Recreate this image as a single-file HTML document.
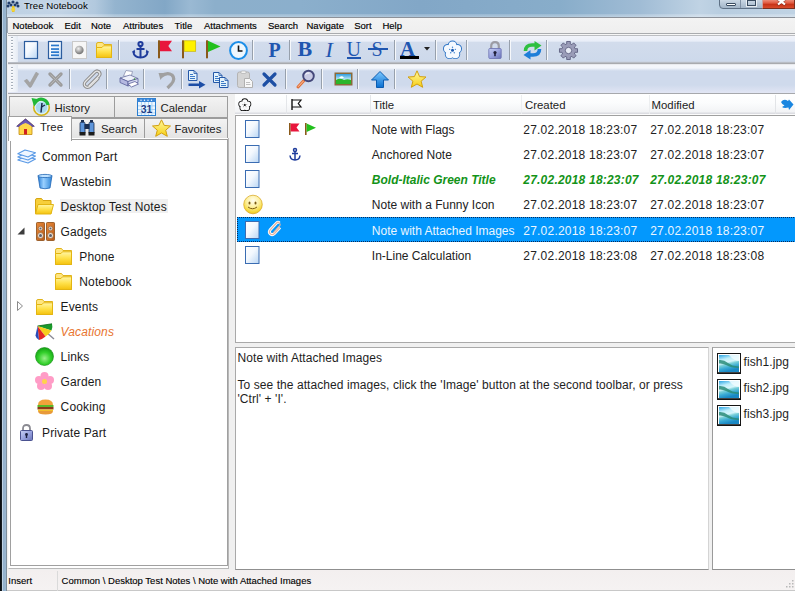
<!DOCTYPE html><html><head><meta charset="utf-8"><style>
*{margin:0;padding:0;box-sizing:border-box}
html,body{width:795px;height:591px;overflow:hidden;background:#f0f0f0;font-family:"Liberation Sans",sans-serif;color:#1a1a1a;position:relative}
.a{position:absolute}
.t{position:absolute;white-space:nowrap;font-size:12px;line-height:14px;color:#222}
svg{position:absolute;overflow:visible}
.mi{position:absolute;top:20px;font-size:9.5px;line-height:11px;color:#000;white-space:nowrap;-webkit-text-stroke:0.15px #000}
.tbar{position:absolute;left:8px;width:787px;background:linear-gradient(#f3f6fa 0,#eef2f8 7px,#d4dfee 9px,#cdd9eb 100%)}
.sep{position:absolute;width:1px;background:#97a0ac;box-shadow:1px 0 0 #f6f8fb}
.grip{position:absolute;left:11px;width:2px;background:repeating-linear-gradient(#a7b0bb 0 1px,#fbfcfd 1px 2px,transparent 2px 3px)}
.bd{position:absolute;border:1px solid #a9a9a9;background:#fff}
</style></head><body>
<div class="a" style="left:0;top:0;width:795px;height:17px;background:linear-gradient(90deg,#bed1e3 0px,#c2d4e6 60px,#b2c9de 95px,#94b4cf 115px,#82a7c6 165px,#9ab9d3 190px,#8cafcb 215px,#8bafcc 300px,#82a7c7 420px,#88adca 560px,#a0bcd5 640px,#c0d3e4 700px,#b8cde0 720px,#c0d3e4 795px)"></div>
<div class="a" style="left:0;top:14px;width:795px;height:3px;background:linear-gradient(rgba(255,255,255,0.15),rgba(255,255,255,0.35))"></div>
<div class="a" style="left:0;top:0;width:2px;height:591px;background:linear-gradient(90deg,#06090c,#1a2228)"></div>
<div class="a" style="left:2px;top:0;width:5px;height:591px;background:linear-gradient(90deg,#c0d3e5 0,#c0d3e5 0.8px,#92b0cc 1.2px,#9ab6d0 3.8px,#7d8e9c 4.2px,#7d8e9c 5px)"></div>
<svg style="left:6px;top:0" width="14" height="13" viewBox="0 0 14 13"><g fill="#213d6b"><circle cx="3" cy="3" r="1.6"/><circle cx="7" cy="2" r="1.6"/><circle cx="11" cy="3" r="1.6"/><circle cx="2" cy="6" r="1.5"/><circle cx="12" cy="6" r="1.5"/><circle cx="5" cy="5" r="1.5"/><circle cx="9" cy="5" r="1.5"/></g><rect x="6" y="6" width="2.5" height="6" fill="#e8c21c"/><circle cx="7.2" cy="9.5" r="2" fill="#f2d43a"/></svg>
<div class="t" style="left:24px;top:1px;font-size:9.7px;line-height:10px;color:#000;text-shadow:0 0 4px rgba(255,255,255,0.6)">Tree Notebook</div>
<div class="a" style="left:719px;top:-2px;width:44px;height:11px;border:1px solid #5f7186;border-radius:0 0 0 4px;background:linear-gradient(#d0dce8,#b8c8d8 50%,#a4b6c8)"></div>
<div class="a" style="left:740px;top:-2px;width:1px;height:10px;background:#7f90a4"></div>
<div class="a" style="left:726px;top:2.5px;width:10px;height:3px;background:#fff;border:1px solid #3a4c60;border-radius:1px"></div>
<div class="a" style="left:747px;top:-2px;width:9px;height:7.5px;border:1px solid #3a4c60;border-top-width:3px;background:transparent;box-shadow:0 0 0 1px rgba(255,255,255,0.7)"></div>
<div class="a" style="left:762px;top:-2px;width:33px;height:11px;border:1px solid #7a3020;border-left:1px solid #c8a0a0;background:linear-gradient(#f09a88,#e05a40 45%,#c83418 60%,#d84a2a)"></div>
<svg style="position:absolute;left:777px;top:-1px;overflow:visible" width="9" height="6"><path d="M0.5 0 L8.5 6 M8.5 0 L0.5 6" stroke="#3a1a10" stroke-width="3" opacity="0.35"/><path d="M1 0 L8 5.5 M8 0 L1 5.5" stroke="#fff" stroke-width="2.2"/></svg>
<div class="a" style="left:7px;top:17px;width:788px;height:16px;background:linear-gradient(#f3f3f3,#efefef);border-top:1px solid #8c9199;border-left:1px solid #99a4b1"></div>
<div class="mi" style="left:12.5px">Notebook</div>
<div class="mi" style="left:64.5px">Edit</div>
<div class="mi" style="left:91px">Note</div>
<div class="mi" style="left:123px">Attributes</div>
<div class="mi" style="left:174.6px">Title</div>
<div class="mi" style="left:204px">Attachments</div>
<div class="mi" style="left:268px">Search</div>
<div class="mi" style="left:306.5px">Navigate</div>
<div class="mi" style="left:354.2px">Sort</div>
<div class="mi" style="left:382.4px">Help</div>
<div class="a" style="left:8px;top:33px;width:787px;height:61px;background:linear-gradient(#a9abae 0px,#a9abae 1px,#f6f6f6 1px,#f6f6f6 2px,#bcbec2 2px,#bcbec2 3px,#f2f4fa 3px,#e9eef8 8px,#d2dcec 9.5px,#cdd9eb 28px,#c9d0dc 29px,#a8aaae 30px,#a8aaae 31px,#dcdee2 31px,#f4f6fa 32px,#f3f6fb 35px,#e0e7f3 36.5px,#cfdaec 38px,#cfdaec 52px,#dfe4f3 59px,#e2e6f4 60px,#a6a8ac 60px,#a6a8ac 61px)"></div>
<div class="a" style="left:8px;top:36px;width:10px;height:26px;background:linear-gradient(90deg,#f7f8fb,#eef2f8 70%,#e4eaf3)"></div>
<div class="a" style="left:8px;top:65px;width:10px;height:27px;background:linear-gradient(90deg,#f7f8fb,#eef2f8 70%,#e4eaf3)"></div>
<div class="grip" style="top:37px;height:24px"></div>
<div class="grip" style="top:67px;height:24px"></div>
<div class="sep" style="left:118px;top:40px;height:19.5px"></div>
<div class="sep" style="left:251.5px;top:40px;height:19.5px"></div>
<div class="sep" style="left:288.5px;top:40px;height:19.5px"></div>
<div class="sep" style="left:393.5px;top:40px;height:19.5px"></div>
<div class="sep" style="left:435px;top:40px;height:19.5px"></div>
<div class="sep" style="left:466px;top:40px;height:19.5px"></div>
<div class="sep" style="left:509px;top:40px;height:19.5px"></div>
<div class="sep" style="left:546px;top:40px;height:19.5px"></div>
<div class="sep" style="left:69px;top:69px;height:20px"></div>
<div class="sep" style="left:106px;top:69px;height:20px"></div>
<div class="sep" style="left:143px;top:69px;height:20px"></div>
<div class="sep" style="left:180.5px;top:69px;height:20px"></div>
<div class="sep" style="left:284.5px;top:69px;height:20px"></div>
<div class="sep" style="left:320.5px;top:69px;height:20px"></div>
<div class="sep" style="left:357px;top:69px;height:20px"></div>
<div class="sep" style="left:394px;top:69px;height:20px"></div>
<svg width="0" height="0" style="position:absolute"><defs>
<linearGradient id="pg" x1="0" y1="0" x2="1" y2="1"><stop offset="0" stop-color="#ffffff"/><stop offset="0.45" stop-color="#f3f8fe"/><stop offset="1" stop-color="#b9d6f4"/></linearGradient>
<linearGradient id="fold" x1="0" y1="0" x2="0" y2="1"><stop offset="0" stop-color="#fff6a8"/><stop offset="0.5" stop-color="#ffe14a"/><stop offset="1" stop-color="#f4c20e"/></linearGradient>
<radialGradient id="sph" cx="0.4" cy="0.35" r="0.7"><stop offset="0" stop-color="#f2f2f2"/><stop offset="0.6" stop-color="#9c9c9c"/><stop offset="1" stop-color="#6a6a6a"/></radialGradient>
<radialGradient id="grn" cx="0.5" cy="0.6" r="0.6"><stop offset="0" stop-color="#9af08a"/><stop offset="0.55" stop-color="#34d02c"/><stop offset="1" stop-color="#12a012"/></radialGradient>
<radialGradient id="smile" cx="0.5" cy="0.3" r="0.75"><stop offset="0" stop-color="#fffdf0"/><stop offset="0.45" stop-color="#fdf0a0"/><stop offset="0.8" stop-color="#f6d838"/><stop offset="1" stop-color="#e8b818"/></radialGradient>
<linearGradient id="sky" x1="0" y1="0" x2="0" y2="1"><stop offset="0" stop-color="#2f9de0"/><stop offset="0.55" stop-color="#bfe9f6"/><stop offset="1" stop-color="#1a8fb0"/></linearGradient>
<linearGradient id="fish" x1="0" y1="0" x2="0.3" y2="1"><stop offset="0" stop-color="#2aa4e4"/><stop offset="0.3" stop-color="#bfeefa"/><stop offset="0.5" stop-color="#d8f6fb"/><stop offset="0.62" stop-color="#78cfd8"/><stop offset="0.8" stop-color="#3aaad4"/><stop offset="1" stop-color="#1a88c4"/></linearGradient>
<linearGradient id="lockg" x1="0" y1="0" x2="1" y2="1"><stop offset="0" stop-color="#c8d0f4"/><stop offset="0.5" stop-color="#9aa4e0"/><stop offset="1" stop-color="#6a74b8"/></linearGradient>
<linearGradient id="bucket" x1="0" y1="0" x2="1" y2="0"><stop offset="0" stop-color="#2a7fd6"/><stop offset="0.4" stop-color="#9ad0ff"/><stop offset="1" stop-color="#2f86d8"/></linearGradient>
<linearGradient id="arrowg" x1="0" y1="0" x2="0" y2="1"><stop offset="0" stop-color="#7cc8ff"/><stop offset="1" stop-color="#0a6fd0"/></linearGradient>
<linearGradient id="starg" x1="0" y1="0" x2="0" y2="1"><stop offset="0" stop-color="#fff8a0"/><stop offset="1" stop-color="#f7cf12"/></linearGradient>
</defs></svg>
<svg style="left:24px;top:41px" width="14" height="18" viewBox="0 0 14 18"><rect x="0.5" y="0.5" width="13" height="17" fill="url(#pg)" stroke="#2c5d9e" stroke-width="1.2"/></svg>
<svg style="left:48px;top:41px" width="14" height="18" viewBox="0 0 14 18"><rect x="0.5" y="0.5" width="13" height="17" fill="url(#pg)" stroke="#2c5d9e" stroke-width="1.2"/><rect x="3" y="3.6" width="8" height="1.7" fill="#2a78cc"/><rect x="3" y="7.2" width="8" height="1.7" fill="#2a78cc"/><rect x="3" y="10.3" width="8" height="1.7" fill="#2a78cc"/><rect x="3" y="13.4" width="8" height="1.7" fill="#2a78cc"/></svg>
<svg style="left:72px;top:41px" width="15" height="18" viewBox="0 0 15 18"><rect x="0.5" y="0.5" width="14" height="17" fill="#f6f6f6" stroke="#c9c9c9"/><circle cx="7.3" cy="9" r="4.3" fill="url(#sph)"/></svg>
<svg style="left:96px;top:42px" width="16" height="16" viewBox="0 0 16 16"><path d="M0.5 2.2 Q0.5 0.5 2 0.5 L6.5 0.5 L8 2.5 L15.5 2.5 L15.5 15.5 L0.5 15.5 Z" fill="#ffe680" stroke="#e0b31a"/><path d="M0.5 5.5 L6 5.5 L7.5 3.8 L15.5 3.8 L15.5 15.5 L0.5 15.5 Z" fill="url(#fold)" stroke="#e3b512"/></svg>
<svg style="left:132px;top:41px" width="17" height="18" viewBox="0 0 17 18"><g fill="none" stroke="#1f3c9c" stroke-width="2"><circle cx="8.5" cy="3" r="2.1"/><line x1="8.5" y1="5" x2="8.5" y2="16.5"/><line x1="4.5" y1="8" x2="12.5" y2="8"/><path d="M1.3 10.5 Q2 16.5 8.5 16.5 Q15 16.5 15.7 10.5"/></g><path d="M0 11 L2.6 8.5 L3.2 12 Z M17 11 L14.4 8.5 L13.8 12Z" fill="#1f3c9c"/></svg>
<svg style="left:157.5px;top:40px" width="15" height="18" viewBox="0 0 15 18"><rect x="0" y="0.3" width="2" height="18" fill="#8a5a1a"/><path d="M2 0.8 L14 0.8 L10.3 6 L14 11.3 L2 11.3 Z" fill="#e8163c"/></svg>
<svg style="left:182px;top:40px" width="15" height="18" viewBox="0 0 15 18"><rect x="0" y="0.3" width="2" height="18" fill="#8a5a1a"/><rect x="2.2" y="0.8" width="11.5" height="10.5" fill="#fff200" stroke="#c8b400" stroke-width="0.7"/></svg>
<svg style="left:206px;top:40px" width="15" height="18" viewBox="0 0 15 18"><rect x="0" y="0.3" width="2" height="18" fill="#8a5a1a"/><path d="M2 0.8 L14.5 6.5 L2 12 Z" fill="#22c01c"/></svg>
<svg style="left:228.5px;top:41px" width="19" height="19" viewBox="0 0 19 19"><circle cx="9.5" cy="9.5" r="8.4" fill="#eef7fd" stroke="#1b8ee8" stroke-width="2"/><path d="M9.5 4.5 L9.5 10 L13.5 10" fill="none" stroke="#111" stroke-width="1.6"/></svg>
<div class="t" style="left:268.5px;top:40px;font-family:'Liberation Serif';font-weight:bold;font-size:20px;line-height:20px;color:#1f56b0">P</div>
<div class="t" style="left:297.5px;top:39px;font-family:'Liberation Serif';font-weight:bold;font-size:22px;line-height:20px;color:#1f56b0">B</div>
<div class="t" style="left:325.5px;top:39.5px;font-family:'Liberation Serif';font-style:italic;font-size:22px;line-height:20px;color:#1f56b0">I</div>
<div class="t" style="left:346.5px;top:39px;font-family:'Liberation Serif';font-size:20px;line-height:20px;color:#1f56b0">U</div>
<div class="a" style="left:347px;top:57px;width:14px;height:1.5px;background:#1f56b0"></div>
<div class="t" style="left:371.5px;top:39px;font-family:'Liberation Serif';font-size:20px;line-height:20px;color:#1f56b0">S</div>
<div class="a" style="left:368px;top:48px;width:20px;height:2px;background:#1f56b0"></div>
<div class="t" style="left:400px;top:39px;font-family:'Liberation Serif';font-weight:bold;font-size:21px;line-height:20px;color:#1f56b0">A</div>
<div class="a" style="left:400px;top:56px;width:19px;height:3px;background:#000"></div>
<svg style="left:424px;top:47px" width="6" height="4" viewBox="0 0 6 4"><path d="M0 0 L6 0 L3 3.5Z" fill="#222"/></svg>
<svg style="left:442.5px;top:41px" width="19" height="18" viewBox="0 0 19 18"><circle cx="9.50" cy="4.40" r="4.1" fill="none" stroke="#2a72c4" stroke-width="1.5"/><circle cx="14.16" cy="7.79" r="4.1" fill="none" stroke="#2a72c4" stroke-width="1.5"/><circle cx="12.38" cy="13.26" r="4.1" fill="none" stroke="#2a72c4" stroke-width="1.5"/><circle cx="6.62" cy="13.26" r="4.1" fill="none" stroke="#2a72c4" stroke-width="1.5"/><circle cx="4.84" cy="7.79" r="4.1" fill="none" stroke="#2a72c4" stroke-width="1.5"/><circle cx="9.50" cy="4.40" r="3.9" fill="#f4f9ff"/><circle cx="14.16" cy="7.79" r="3.9" fill="#f4f9ff"/><circle cx="12.38" cy="13.26" r="3.9" fill="#f4f9ff"/><circle cx="6.62" cy="13.26" r="3.9" fill="#f4f9ff"/><circle cx="4.84" cy="7.79" r="3.9" fill="#f4f9ff"/><circle cx="9.5" cy="9.3" r="4.5" fill="#f4f9ff"/><circle cx="9.5" cy="9.3" r="1.5" fill="#1a5ab0"/><circle cx="9.50" cy="6.30" r="0.7" fill="#3a82d0"/><circle cx="12.35" cy="8.37" r="0.7" fill="#3a82d0"/><circle cx="11.26" cy="11.73" r="0.7" fill="#3a82d0"/><circle cx="7.74" cy="11.73" r="0.7" fill="#3a82d0"/><circle cx="6.65" cy="8.37" r="0.7" fill="#3a82d0"/></svg>
<svg style="left:488px;top:41px" width="14" height="18" viewBox="0 0 14 18"><path d="M3.2 8 L3.2 5.2 Q3.2 1.2 7 1.2 Q10.8 1.2 10.8 5.2 L10.8 8" fill="none" stroke="#9c9ca4" stroke-width="2.2"/><rect x="0.8" y="7.5" width="12.4" height="10" rx="1" fill="url(#lockg)" stroke="#6a70b0" stroke-width="0.8"/><circle cx="7" cy="11.5" r="1.6" fill="#20203a"/><rect x="6.2" y="12" width="1.6" height="3.2" fill="#20203a"/></svg>
<svg style="left:523px;top:41px" width="19" height="18" viewBox="0 0 19 18"><path d="M2.5 10 Q2.5 4 9 4 L12 4" fill="none" stroke="#2ec040" stroke-width="3.6"/><path d="M11.5 0 L18.5 4.5 L11.5 9.5Z" fill="#2ec040"/><path d="M16.5 8 Q16.5 14 10 14 L7 14" fill="none" stroke="#1e7ed8" stroke-width="3.6"/><path d="M7.5 9 L0.5 14 L7.5 18.5Z" fill="#1e7ed8"/></svg>
<svg style="left:559px;top:41px" width="19" height="19" viewBox="0 0 19 19"><g transform="translate(9.5,9.5)"><path d="M6.57 -1.75 L9.02 -1.83 L9.02 1.83 L6.57 1.75 L5.88 3.41 L7.67 5.08 L5.08 7.67 L3.41 5.88 L1.75 6.57 L1.83 9.02 L-1.83 9.02 L-1.75 6.57 L-3.41 5.88 L-5.08 7.67 L-7.67 5.08 L-5.88 3.41 L-6.57 1.75 L-9.02 1.83 L-9.02 -1.83 L-6.57 -1.75 L-5.88 -3.41 L-7.67 -5.08 L-5.08 -7.67 L-3.41 -5.88 L-1.75 -6.57 L-1.83 -9.02 L1.83 -9.02 L1.75 -6.57 L3.41 -5.88 L5.08 -7.67 L7.67 -5.08 L5.88 -3.41 Z" fill="#9a9cb8" stroke="#5e6080" stroke-width="0.9"/><circle r="3.2" fill="#e8ecf6" stroke="#5e6080" stroke-width="0.9"/></g></svg>
<svg style="left:24px;top:72px" width="15" height="16" viewBox="0 0 15 16"><path d="M0.3 8.8 L3 7.3 L6 11 L12 0.2 L14.6 1.8 L7 15.2 L5.4 15.2 Z" fill="#a4a4a4" stroke="#9a9a9a" stroke-width="0.6" stroke-linejoin="round"/></svg>
<svg style="left:48px;top:72px" width="15" height="15" viewBox="0 0 15 15"><path d="M2 2 L13 13 M13 2 L2 13" fill="none" stroke="#9c9c9c" stroke-width="3.4" stroke-linecap="round"/><path d="M2.5 2.5 L12.5 12.5 M12.5 2.5 L2.5 12.5" fill="none" stroke="#b4b4b4" stroke-width="1"/></svg>
<svg style="left:83px;top:70px" width="18" height="18" viewBox="0 0 18 18"><path d="M16 2 Q14 0 12 2 L2.5 11.5 Q0 14.5 2.5 16.5 Q5 18.5 8 15.5 L15 8.5" fill="none" stroke="#8e8e8e" stroke-width="3.2" stroke-linecap="round"/><path d="M16 2 Q18 4 16 6 L6 16" fill="none" stroke="#8e8e8e" stroke-width="3.2" stroke-linecap="round"/><path d="M16 2 Q14 0 12 2 L2.5 11.5 Q0 14.5 2.5 16.5 Q5 18.5 8 15.5 L15 8.5" fill="none" stroke="#e6e6e6" stroke-width="1.2" stroke-linecap="round"/><path d="M16 2 Q18 4 16 6 L6 16" fill="none" stroke="#e6e6e6" stroke-width="1.2" stroke-linecap="round"/></svg>
<svg style="left:119px;top:70px" width="20" height="18" viewBox="0 0 20 18"><path d="M4.5 6 L7 0.5 L13.5 1.5 L12 7Z" fill="#fff" stroke="#8a90b0" stroke-width="0.8"/><path d="M1 8 L11 5 L19 8.5 L9 11.5Z" fill="#eef0fa" stroke="#6a70a0" stroke-width="0.8"/><path d="M1 8 L9 11.5 L9 16 L1 12.5Z" fill="#b4b8e0" stroke="#5a609a" stroke-width="0.8"/><path d="M9 11.5 L19 8.5 L19 12.5 L9 16Z" fill="#d4d8f0" stroke="#5a609a" stroke-width="0.8"/><path d="M9 14 L16 11.5 L19.5 14 L12.5 17Z" fill="#fff" stroke="#5a609a" stroke-width="0.8"/><circle cx="15.5" cy="9" r="0.8" fill="#2a8a2a"/></svg>
<svg style="left:158px;top:71px" width="18" height="18" viewBox="0 0 18 18"><path d="M3 5.5 Q9 0.5 14 4 Q18 8 13 13.5 L9.5 17" fill="none" stroke="#a0a0a0" stroke-width="3.2"/><path d="M0.5 2 L7 2 L2.5 9Z" fill="#a0a0a0"/></svg>
<svg style="left:188px;top:70px" width="18" height="19" viewBox="0 0 18 19"><path d="M0.5 0.5 L6 0.5 L9 3.5 L9 10.5 L0.5 10.5Z" fill="#e4f3fc" stroke="#2458a8" stroke-width="1"/><path d="M6 0.5 L6 3.5 L9 3.5" fill="none" stroke="#2458a8" stroke-width="0.8"/><g fill="#2a6cc0"><rect x="2" y="4" width="3" height="0.9"/><rect x="2" y="6" width="5" height="0.9"/><rect x="2" y="8" width="5" height="0.9"/></g><path d="M0.5 13.5 L11 13.5 L11 11 L17.5 14.8 L11 18.5 L11 16 L0.5 16Z" fill="#1d4ea6"/></svg>
<svg style="left:213px;top:72px" width="17" height="16" viewBox="0 0 17 16"><path d="M0.5 0.5 L6 0.5 L9 3.5 L9 10.5 L0.5 10.5Z" fill="#e4f3fc" stroke="#2458a8" stroke-width="1"/><path d="M6 0.5 L6 3.5 L9 3.5" fill="none" stroke="#2458a8" stroke-width="0.8"/><g fill="#2a6cc0"><rect x="2" y="4" width="3" height="0.9"/><rect x="2" y="6" width="5" height="0.9"/><rect x="2" y="8" width="5" height="0.9"/></g><path d="M6.5 5.5 L12 5.5 L15 8.5 L15 15.5 L6.5 15.5Z" fill="#e4f3fc" stroke="#2458a8" stroke-width="1"/><path d="M12 5.5 L12 8.5 L15 8.5" fill="none" stroke="#2458a8" stroke-width="0.8"/><g fill="#2a6cc0"><rect x="8" y="9" width="3" height="0.9"/><rect x="8" y="11" width="5" height="0.9"/><rect x="8" y="13" width="5" height="0.9"/></g></svg>
<svg style="left:236.5px;top:71px" width="17" height="17" viewBox="0 0 17 17"><rect x="0.5" y="1" width="12" height="15.5" rx="2" fill="#d4d4d4" stroke="#b4b4b4"/><rect x="4" y="0" width="5" height="2.5" rx="1" fill="#f2f2f2" stroke="#a8a8a8" stroke-width="0.6"/><path d="M7.5 7.5 L12.5 7.5 L15.5 10.5 L15.5 16.5 L7.5 16.5Z" fill="#f8f8f8" stroke="#b0b0b0"/><g fill="#b8b8b8"><rect x="9" y="11" width="4" height="0.9"/><rect x="9" y="13" width="4.5" height="0.9"/></g></svg>
<svg style="left:262px;top:72px" width="15" height="15" viewBox="0 0 15 15"><path d="M2 2 L13 13 M13 2 L2 13" fill="none" stroke="#1d4fa4" stroke-width="3.2" stroke-linecap="round"/></svg>
<svg style="left:296px;top:70px" width="20" height="19" viewBox="0 0 20 19"><line x1="2" y1="17" x2="8" y2="10.5" stroke="#e0703a" stroke-width="3" stroke-linecap="round"/><line x1="2.3" y1="16.5" x2="7.5" y2="11" stroke="#ffd0b0" stroke-width="0.9" stroke-linecap="round"/><circle cx="12.5" cy="6" r="5.3" fill="#c9cbe4" stroke="#44487a" stroke-width="1.9"/><path d="M9.5 4.5 Q11 2.5 13.5 3" stroke="#fff" stroke-width="1" fill="none"/></svg>
<svg style="left:334px;top:72px" width="19" height="14" viewBox="0 0 19 14"><rect x="0.5" y="0.5" width="18" height="13" fill="#8a6a3a"/><rect x="2" y="2" width="15" height="10" fill="url(#sky)"/><path d="M2 8 Q6 5.5 10 8 Q13.5 6.5 17 8 L17 12 L2 12Z" fill="#2bb52b"/><path d="M5 6 Q7 3 10 5.5 L8 6.5Z" fill="#fff"/></svg>
<svg style="left:371px;top:71px" width="18" height="17" viewBox="0 0 18 17"><path d="M9 0.5 L17.5 9 L12.5 9 L12.5 16.5 L5.5 16.5 L5.5 9 L0.5 9Z" fill="url(#arrowg)" stroke="#0c5cb0"/></svg>
<svg style="left:407px;top:70px" width="20" height="18" viewBox="0 0 20 18"><path d="M10 0.8 L12.6 6.6 L19 7 L14.1 11.2 L15.7 17.3 L10 14 L4.3 17.3 L5.9 11.2 L1 7 L7.4 6.6Z" fill="url(#starg)" stroke="#d2a010" stroke-width="1"/></svg>
<div class="a" style="left:9px;top:96px;width:106px;height:22px;background:linear-gradient(#f3f3f3,#e4e4e4);border:1px solid #9c9c9c;"></div>
<div class="a" style="left:114px;top:96px;width:114px;height:22px;background:linear-gradient(#f3f3f3,#e4e4e4);border:1px solid #9c9c9c;"></div>
<div class="a" style="left:71px;top:118px;width:74px;height:21px;background:linear-gradient(#f3f3f3,#e4e4e4);border:1px solid #9c9c9c;"></div>
<div class="a" style="left:144px;top:118px;width:84px;height:21px;background:linear-gradient(#f3f3f3,#e4e4e4);border:1px solid #9c9c9c;"></div>
<div class="a" style="left:8px;top:138px;width:221px;height:431px;background:#fff;border:1px solid #b8b8b8;border-top:none;border-left-color:#fafafa"></div>
<div class="a" style="left:10px;top:139px;width:218px;height:427px;background:#fff;border:1px solid #a0a0a0"></div>
<div class="a" style="left:8px;top:116px;width:64px;height:25px;background:#fff;border:1px solid #a0a0a0;border-bottom:none"></div>
<div class="t" style="left:54.5px;top:101px;font-size:11.4px;color:#1c1c1c">History</div>
<div class="t" style="left:160.5px;top:101px;font-size:11.4px;color:#1c1c1c">Calendar</div>
<div class="t" style="left:40px;top:120px;font-size:11.4px;color:#1c1c1c">Tree</div>
<div class="t" style="left:101px;top:122px;font-size:11.4px;color:#1c1c1c">Search</div>
<div class="t" style="left:174.5px;top:122px;font-size:11.4px;color:#1c1c1c">Favorites</div>
<svg style="left:31px;top:97px" width="19" height="19" viewBox="0 0 19 19"><circle cx="10.5" cy="10.5" r="7.8" fill="#d6eefa" stroke="#d4b418" stroke-width="1.6"/><circle cx="10.5" cy="10.5" r="5.6" fill="#a8d8f0"/><path d="M11 6 L10 15.5" stroke="#1a2a4a" stroke-width="1.5"/><path d="M10.5 10 L14 8" stroke="#1a2a4a" stroke-width="1.2"/><path d="M17 8 A7 7 0 0 0 6 3.5" stroke="#20b838" stroke-width="3.2" fill="none"/><path d="M0.5 1 L9 2.5 L3 9.5Z" fill="#20b838"/></svg>
<svg style="left:137px;top:98px" width="19" height="18" viewBox="0 0 19 18"><rect x="0.5" y="0.5" width="18" height="17" fill="#eef7ff" stroke="#2a7ed0"/><rect x="4" y="4" width="0.8" height="13" fill="#9ccaf2"/><rect x="7.5" y="4" width="0.8" height="13" fill="#9ccaf2"/><rect x="11" y="4" width="0.8" height="13" fill="#9ccaf2"/><rect x="14.5" y="4" width="0.8" height="13" fill="#9ccaf2"/><rect x="1" y="7.5" width="17" height="0.8" fill="#9ccaf2"/><rect x="1" y="11" width="17" height="0.8" fill="#9ccaf2"/><rect x="1" y="14.5" width="17" height="0.8" fill="#9ccaf2"/><rect x="0.5" y="0.5" width="18" height="3.5" fill="#3a86d8"/><g fill="#fff"><circle cx="4" cy="2.2" r="0.7"/><circle cx="7.5" cy="2.2" r="0.7"/><circle cx="11" cy="2.2" r="0.7"/><circle cx="14.5" cy="2.2" r="0.7"/></g><text x="9.5" y="15.3" text-anchor="middle" font-family="Liberation Sans" font-weight="bold" font-size="10.5" fill="#173e8a" stroke="#fff" stroke-width="0.6" paint-order="stroke">31</text></svg>
<svg style="left:16px;top:118px" width="19" height="18" viewBox="0 0 19 18"><path d="M1 8 L9.5 1 L18 8 L16 8 L16 16.5 L3 16.5 L3 8Z" fill="#ffd84a" stroke="#c08a10" stroke-width="0.8"/><path d="M0 8.5 L9.5 0.5 L19 8.5 L16.5 9 L9.5 3.5 L2.5 9Z" fill="#5a4aa0"/><path d="M2 8 L9.5 2 L17 8 L9.5 5Z" fill="#6d5cb8"/><rect x="8" y="11" width="3" height="5.5" fill="#d02020"/></svg>
<svg style="left:78.5px;top:120px" width="16" height="16" viewBox="0 0 16 16"><rect x="1" y="2" width="5" height="12" rx="1.5" fill="#5e96dc" stroke="#1a2e52" stroke-width="0.8"/><rect x="10" y="2" width="5" height="12" rx="1.5" fill="#5e96dc" stroke="#1a2e52" stroke-width="0.8"/><rect x="5.5" y="4" width="5" height="5" fill="#1a2e52"/><rect x="0.5" y="12" width="6" height="3.5" fill="#1c1c1c"/><rect x="9.5" y="12" width="6" height="3.5" fill="#1c1c1c"/><rect x="2" y="0" width="3" height="2.5" fill="#1a2e52"/><rect x="11" y="0" width="3" height="2.5" fill="#1a2e52"/></svg>
<svg style="left:151.5px;top:119px" width="19" height="18" viewBox="0 0 19 18"><path d="M9.5 0.8 L12.2 6.4 L18.5 7 L13.7 11.2 L15.3 17.3 L9.5 14 L3.7 17.3 L5.3 11.2 L0.5 7 L6.8 6.4Z" fill="url(#starg)" stroke="#d2a010" stroke-width="1"/></svg>
<div class="a" style="left:60px;top:199px;width:108px;height:14px;background:#f0f0f0"></div>
<div class="t" style="left:42px;top:149.5px;font-size:12px;letter-spacing:0.13px;color:#1a1a1a;">Common Part</div>
<div class="t" style="left:60.6px;top:174.6px;font-size:12px;letter-spacing:0.13px;color:#1a1a1a;">Wastebin</div>
<div class="t" style="left:60.6px;top:199.7px;font-size:12px;letter-spacing:0.13px;color:#1a1a1a;">Desktop Test Notes</div>
<div class="t" style="left:60.6px;top:224.8px;font-size:12px;letter-spacing:0.13px;color:#1a1a1a;">Gadgets</div>
<div class="t" style="left:79.3px;top:249.89999999999998px;font-size:12px;letter-spacing:0.13px;color:#1a1a1a;">Phone</div>
<div class="t" style="left:79.3px;top:274.9px;font-size:12px;letter-spacing:0.13px;color:#1a1a1a;">Notebook</div>
<div class="t" style="left:60.6px;top:300.0px;font-size:12px;letter-spacing:0.13px;color:#1a1a1a;">Events</div>
<div class="t" style="left:60.6px;top:325.1px;font-size:12px;letter-spacing:0.13px;color:#1a1a1a;font-style:italic;color:#e8742e">Vacations</div>
<div class="t" style="left:60.6px;top:350.2px;font-size:12px;letter-spacing:0.13px;color:#1a1a1a;">Links</div>
<div class="t" style="left:60.6px;top:375.3px;font-size:12px;letter-spacing:0.13px;color:#1a1a1a;">Garden</div>
<div class="t" style="left:60.6px;top:400.4px;font-size:12px;letter-spacing:0.13px;color:#1a1a1a;">Cooking</div>
<div class="t" style="left:42px;top:425.5px;font-size:12px;letter-spacing:0.13px;color:#1a1a1a;">Private Part</div>
<svg style="left:16.5px;top:149px" width="20" height="15" viewBox="0 0 20 15"><g fill="#f0f6ff" stroke="#5a9ae6" stroke-width="1.1" stroke-linejoin="round"><path d="M8 7.5 L18.5 10 L11 14 L0.8 11Z"/><path d="M8 4.5 L18.5 7 L11 11 L0.8 8Z"/><path d="M8 1 L18.5 3.8 L11 8 L0.8 4.8Z"/></g></svg>
<svg style="left:37px;top:174px" width="16" height="15" viewBox="0 0 16 15"><path d="M1 1.5 L15 1.5 L13 14 Q8 15.5 3 14Z" fill="url(#bucket)" stroke="#1e64b4" stroke-width="0.8"/><ellipse cx="8" cy="2" rx="7" ry="1.6" fill="#bfe2ff" stroke="#1e64b4" stroke-width="0.8"/></svg>
<svg style="left:35px;top:198px" width="19" height="17" viewBox="0 0 19 17"><path d="M0.5 2 Q0.5 0.5 2 0.5 L6.5 0.5 L8 2.5 L16 2.5 L16 15.5 L0.5 15.5Z" fill="#f7cf3a" stroke="#d6a512"/><path d="M3 6.5 L18.5 6.5 L16 16 L0.5 16Z" fill="url(#fold)" stroke="#e3b512"/></svg>
<svg style="left:35.5px;top:222px" width="19" height="19" viewBox="0 0 19 19"><defs><linearGradient id="spk" x1="0" y1="0" x2="1" y2="1"><stop offset="0" stop-color="#e88a3a"/><stop offset="1" stop-color="#b85a1a"/></linearGradient></defs><g stroke="#8a4a12" stroke-width="0.8"><rect x="0.5" y="0.5" width="8" height="18" rx="0.8" fill="url(#spk)"/><rect x="10.5" y="0.5" width="8" height="18" rx="0.8" fill="url(#spk)"/></g><g fill="#f2e4d4" stroke="#7a4a20" stroke-width="0.5"><circle cx="4.5" cy="6.5" r="2.2"/><circle cx="4.5" cy="13.5" r="2.9"/><circle cx="14.5" cy="6.5" r="2.2"/><circle cx="14.5" cy="13.5" r="2.9"/></g><g fill="#5a6070"><circle cx="4.5" cy="6.5" r="1"/><circle cx="4.5" cy="13.5" r="1.5"/><circle cx="14.5" cy="6.5" r="1"/><circle cx="14.5" cy="13.5" r="1.5"/></g></svg>
<svg style="left:17px;top:227px" width="8" height="8" viewBox="0 0 8 8"><path d="M7.5 0.5 L7.5 7.5 L0.5 7.5Z" fill="#3c3c3c"/></svg>
<svg style="left:55px;top:248px" width="17" height="17" viewBox="0 0 17 17"><path d="M0.5 2.2 Q0.5 0.5 2 0.5 L6.5 0.5 L8 2.5 L16.5 2.5 L16.5 16.5 L0.5 16.5 Z" fill="#ffe680" stroke="#e0b31a"/><path d="M0.5 5.5 L6 5.5 L7.5 3.8 L16.5 3.8 L16.5 16.5 L0.5 16.5 Z" fill="url(#fold)" stroke="#e3b512"/></svg>
<svg style="left:55px;top:273px" width="17" height="17" viewBox="0 0 17 17"><path d="M0.5 2.2 Q0.5 0.5 2 0.5 L6.5 0.5 L8 2.5 L16.5 2.5 L16.5 16.5 L0.5 16.5 Z" fill="#ffe680" stroke="#e0b31a"/><path d="M0.5 5.5 L6 5.5 L7.5 3.8 L16.5 3.8 L16.5 16.5 L0.5 16.5 Z" fill="url(#fold)" stroke="#e3b512"/></svg>
<svg style="left:17px;top:301px" width="6" height="10" viewBox="0 0 6 10"><path d="M0.5 0.5 L5.5 5 L0.5 9.5Z" fill="none" stroke="#8a8a8a"/></svg>
<svg style="left:35.5px;top:299px" width="17" height="16" viewBox="0 0 17 16"><path d="M0.5 2.2 Q0.5 0.5 2 0.5 L6.5 0.5 L8 2.5 L16.5 2.5 L16.5 15.5 L0.5 15.5 Z" fill="#ffe680" stroke="#e0b31a"/><path d="M0.5 5.5 L6 5.5 L7.5 3.8 L16.5 3.8 L16.5 15.5 L0.5 15.5 Z" fill="url(#fold)" stroke="#e3b512"/></svg>
<svg style="left:35px;top:322px" width="20" height="19" viewBox="0 0 20 19"><line x1="11" y1="10" x2="19" y2="17" stroke="#8a8a96" stroke-width="1.4"/><path d="M2.5 4 L17 1.8 Q18 5 16.5 8.5Z" fill="#1a9a2a"/><path d="M2.5 4 L16.5 8.5 Q14 12.5 10.5 14.5Z" fill="#f6cf1a"/><path d="M2.5 4 L10.5 14.5 Q7 17.5 4 18Z" fill="#e42a22"/><path d="M2.5 4 L4 18 Q1 16.5 0.5 13.5Z" fill="#2a4ab8"/><path d="M2.5 4 L17 1.8" stroke="#0a6a1a" stroke-width="0.8"/></svg>
<svg style="left:35px;top:347px" width="19" height="19" viewBox="0 0 19 19"><circle cx="9.5" cy="9.5" r="9" fill="url(#grn)" stroke="#0d8a0d" stroke-width="0.6"/></svg>
<svg style="left:35px;top:372px" width="19" height="18" viewBox="0 0 19 18"><g fill="#ff9cc6"><circle cx="9.5" cy="4" r="4"/><circle cx="15" cy="8" r="4"/><circle cx="13" cy="14" r="4"/><circle cx="6" cy="14" r="4"/><circle cx="4" cy="8" r="4"/></g><circle cx="9.5" cy="9.5" r="2.5" fill="#ffd24a"/></svg>
<svg style="left:36.5px;top:399px" width="17" height="16" viewBox="0 0 17 16"><path d="M1 6 Q1 0.5 8.5 0.5 Q16 0.5 16 6Z" fill="#f0a23a"/><rect x="0.5" y="6" width="16" height="2" fill="#5ab82a"/><rect x="0.5" y="8" width="16" height="2.5" fill="#8a3a1a"/><rect x="1" y="10.5" width="15" height="1.5" fill="#f2c02a"/><path d="M1 12 L16 12 Q16 15.5 8.5 15.5 Q1 15.5 1 12Z" fill="#e89a3a"/></svg>
<svg style="left:20px;top:424px" width="13" height="17" viewBox="0 0 13 17"><path d="M3 7 L3 4.5 Q3 1 6.5 1 Q10 1 10 4.5 L10 7" fill="none" stroke="#8a8a92" stroke-width="1.8"/><rect x="0.5" y="6.5" width="12" height="10" rx="1" fill="url(#lockg)" stroke="#4a5290"/><circle cx="6.5" cy="10.5" r="1.4" fill="#1c2040"/><rect x="5.8" y="11" width="1.4" height="3" fill="#1c2040"/></svg>
<div class="a" style="left:235px;top:94px;width:560px;height:21px;background:linear-gradient(#ffffff 0px,#fbfcfd 9px,#f2f3f5 18px,#dcdde2 19px,#dcdde2 20px,#fcfcfc 20px)"></div>
<div class="a" style="left:286px;top:95px;width:1px;height:19px;background:#e4e6e9"></div>
<div class="a" style="left:369.5px;top:95px;width:1px;height:19px;background:#e4e6e9"></div>
<div class="a" style="left:521px;top:95px;width:1px;height:19px;background:#eceef0"></div>
<div class="a" style="left:648.5px;top:95px;width:1px;height:19px;background:#eceef0"></div>
<div class="a" style="left:775px;top:95px;width:1px;height:19px;background:#e2e4e7"></div>
<div class="t" style="left:373px;top:98px;font-size:11.4px;color:#1c1c1c">Title</div>
<div class="t" style="left:525px;top:98px;font-size:11.4px;color:#1c1c1c">Created</div>
<div class="t" style="left:651.5px;top:98px;font-size:11.4px;color:#1c1c1c">Modified</div>
<svg style="left:237.5px;top:98.6px" width="14" height="12" viewBox="0 0 14 12"><circle cx="6.80" cy="2.70" r="2.7" fill="none" stroke="#111" stroke-width="1.3"/><circle cx="9.94" cy="4.98" r="2.7" fill="none" stroke="#111" stroke-width="1.3"/><circle cx="8.74" cy="8.67" r="2.7" fill="none" stroke="#111" stroke-width="1.3"/><circle cx="4.86" cy="8.67" r="2.7" fill="none" stroke="#111" stroke-width="1.3"/><circle cx="3.66" cy="4.98" r="2.7" fill="none" stroke="#111" stroke-width="1.3"/><circle cx="6.80" cy="2.70" r="2.5" fill="#f9f9fa"/><circle cx="9.94" cy="4.98" r="2.5" fill="#f9f9fa"/><circle cx="8.74" cy="8.67" r="2.5" fill="#f9f9fa"/><circle cx="4.86" cy="8.67" r="2.5" fill="#f9f9fa"/><circle cx="3.66" cy="4.98" r="2.5" fill="#f9f9fa"/><circle cx="6.8" cy="6" r="3" fill="#f9f9fa"/><circle cx="6.8" cy="6" r="1.1" fill="#111"/><g fill="#555"><circle cx="6.8" cy="3.9" r="0.45"/><circle cx="8.8" cy="5.4" r="0.45"/><circle cx="8" cy="7.8" r="0.45"/><circle cx="5.6" cy="7.8" r="0.45"/><circle cx="4.8" cy="5.4" r="0.45"/></g></svg>
<svg style="left:291px;top:99px" width="11" height="11" viewBox="0 0 11 11"><path d="M1 0 L1 11" stroke="#111" stroke-width="1.4"/><path d="M1 1 L10 1 L7.3 4.5 L10 8 L1 8" fill="none" stroke="#111" stroke-width="1.2"/></svg>
<svg style="left:780px;top:99px" width="14" height="12" viewBox="0 0 14 12"><path d="M1 3 Q4 -1 8 2 L9 0.5 L13.5 5.5 L9 11 L8.5 8.5 Q4 9.5 2 8 L4.5 6.5 Q2 5.5 1 3Z" fill="#1a86e0"/></svg>
<div class="a" style="left:235px;top:115px;width:560px;height:228px;background:#fff;border-left:1px solid #a9a9a9;border-top:1px solid #a0a0a0;border-bottom:1px solid #a9a9a9"></div>
<div class="a" style="left:236.5px;top:216.6px;width:559px;height:25.2px;background:#0398fd;border:1px dotted #0a2a5a"></div>
<div class="t" style="left:371.8px;top:123px;">Note with Flags</div>
<div class="t" style="left:523.3px;top:123px;letter-spacing:0.21px;">27.02.2018 18:23:07</div>
<div class="t" style="left:650.2px;top:123px;letter-spacing:0.21px;">27.02.2018 18:23:07</div>
<svg style="left:245px;top:120px" width="15" height="18" viewBox="0 0 15 18"><rect x="0.5" y="0.5" width="13.5" height="17" fill="url(#pg)" stroke="#3a6cb2" stroke-width="1"/></svg>
<div class="t" style="left:371.8px;top:148px;">Anchored Note</div>
<div class="t" style="left:523.3px;top:148px;letter-spacing:0.21px;">27.02.2018 18:23:07</div>
<div class="t" style="left:650.2px;top:148px;letter-spacing:0.21px;">27.02.2018 18:23:07</div>
<svg style="left:245px;top:145px" width="15" height="18" viewBox="0 0 15 18"><rect x="0.5" y="0.5" width="13.5" height="17" fill="url(#pg)" stroke="#3a6cb2" stroke-width="1"/></svg>
<div class="t" style="left:371.8px;top:173px;font-weight:bold;font-style:italic;color:#139318">Bold-Italic Green Title</div>
<div class="t" style="left:523.3px;top:173px;letter-spacing:0.21px;font-weight:bold;font-style:italic;color:#139318">27.02.2018 18:23:07</div>
<div class="t" style="left:650.2px;top:173px;letter-spacing:0.21px;font-weight:bold;font-style:italic;color:#139318">27.02.2018 18:23:07</div>
<svg style="left:245px;top:170px" width="15" height="18" viewBox="0 0 15 18"><rect x="0.5" y="0.5" width="13.5" height="17" fill="url(#pg)" stroke="#3a6cb2" stroke-width="1"/></svg>
<div class="t" style="left:371.8px;top:198px;">Note with a Funny Icon</div>
<div class="t" style="left:523.3px;top:198px;letter-spacing:0.21px;">27.02.2018 18:23:07</div>
<div class="t" style="left:650.2px;top:198px;letter-spacing:0.21px;">27.02.2018 18:23:07</div>
<svg style="left:242.5px;top:195px" width="20" height="19" viewBox="0 0 20 19"><circle cx="10" cy="9.5" r="9.3" fill="url(#smile)" stroke="#d6a21a" stroke-width="0.7"/><ellipse cx="6.5" cy="8" rx="1" ry="1.6" fill="#7a5a10"/><ellipse cx="12.5" cy="8" rx="1" ry="1.6" fill="#7a5a10"/><path d="M5 12 Q9.5 15.5 14 12" fill="none" stroke="#7a5a10" stroke-width="1"/></svg>
<div class="t" style="left:371.8px;top:224px;color:#eaf6ff">Note with Attached Images</div>
<div class="t" style="left:523.3px;top:224px;letter-spacing:0.21px;color:#eaf6ff">27.02.2018 18:23:07</div>
<div class="t" style="left:650.2px;top:224px;letter-spacing:0.21px;color:#eaf6ff">27.02.2018 18:23:07</div>
<svg style="left:245px;top:221px" width="15" height="18" viewBox="0 0 15 18"><rect x="0.5" y="0.5" width="13.5" height="17" fill="url(#pg)" stroke="#3a6cb2" stroke-width="1"/></svg>
<div class="t" style="left:371.8px;top:249px;">In-Line Calculation</div>
<div class="t" style="left:523.3px;top:249px;letter-spacing:0.21px;">27.02.2018 18:23:08</div>
<div class="t" style="left:650.2px;top:249px;letter-spacing:0.21px;">27.02.2018 18:23:08</div>
<svg style="left:245px;top:246px" width="15" height="18" viewBox="0 0 15 18"><rect x="0.5" y="0.5" width="13.5" height="17" fill="url(#pg)" stroke="#3a6cb2" stroke-width="1"/></svg>
<svg style="left:289px;top:123px" width="11" height="12" viewBox="0 0 11 12"><rect x="0" y="0" width="1.6" height="12" fill="#8a5a1a"/><path d="M1.6 0.5 L10.5 0.5 L7.5 4.5 L10.5 8.5 L1.6 8.5Z" fill="#e8163c"/></svg>
<svg style="left:305px;top:123px" width="11" height="12" viewBox="0 0 11 12"><rect x="0" y="0" width="1.6" height="12" fill="#8a5a1a"/><path d="M1.6 0.5 L11 4.8 L1.6 9Z" fill="#22c01c"/></svg>
<svg style="left:289px;top:148px" width="12" height="13" viewBox="0 0 12 13"><g fill="none" stroke="#1f3c9c" stroke-width="1.5"><circle cx="6" cy="2" r="1.5"/><line x1="6" y1="3.5" x2="6" y2="12"/><line x1="3" y1="5.5" x2="9" y2="5.5"/><path d="M1 7.5 Q1.5 12 6 12 Q10.5 12 11 7.5"/></g></svg>
<svg style="left:268px;top:221px" width="14" height="16" viewBox="0 0 14 16"><path d="M11.5 2 Q10 0.5 8.5 2 L2 9 Q0.5 11.5 2.5 13 Q4.5 14.5 6.5 12.5 L12 6.5" fill="none" stroke="#fff" stroke-width="3"/><path d="M11.5 2 Q10 0.5 8.5 2 L2 9 Q0.5 11.5 2.5 13 Q4.5 14.5 6.5 12.5 L12 6.5" fill="none" stroke="#e4b4a0" stroke-width="1.2"/><path d="M11.5 2 Q13 4 11 5.5 L5 12" fill="none" stroke="#e4b4a0" stroke-width="1.1"/></svg>
<div class="a" style="left:235px;top:347px;width:474px;height:223px;background:#fff;border-left:1px solid #a9a9a9;border-top:1px solid #a9a9a9;border-right:1px solid #d4d4d4;border-bottom:1px solid #8f8f8f"></div>
<div class="t" style="left:237.5px;top:351px;font-size:12px;letter-spacing:0.07px;color:#1e1e1e">Note with Attached Images</div>
<div class="t" style="left:237.5px;top:378px;font-size:12px;letter-spacing:0.07px;color:#1e1e1e">To see the attached images, click the 'Image' button at the second toolbar, or press</div>
<div class="t" style="left:237.5px;top:392px;font-size:12px;letter-spacing:0.07px;color:#1e1e1e">'Ctrl' + 'I'.</div>
<div class="a" style="left:712px;top:347px;width:83px;height:223px;background:#fff;border-left:1px solid #9a9a9a;border-top:1px solid #a9a9a9;border-bottom:1px solid #8f8f8f"></div>
<svg style="left:717px;top:353px" width="24" height="21" viewBox="0 0 24 21"><rect x="0.5" y="0.5" width="23" height="20" fill="#fff" stroke="#151515"/><rect x="1" y="19.2" width="23" height="1.3" fill="#151515"/><rect x="2" y="2" width="20" height="17" fill="url(#fish)"/><path d="M2 7 Q7 6.5 11 10 Q15 13 22 13.5 L22 15 Q14 15 9 12 Q5 10 2 10.5Z" fill="#2a8c78" opacity="0.85"/><path d="M12 2 L22 2 L22 8 Q17 8 12 2Z" fill="#f2fcff" opacity="0.8"/></svg>
<div class="t" style="left:743.5px;top:355px;font-size:12px;letter-spacing:0.1px;color:#1e1e1e">fish1.jpg</div>
<svg style="left:717px;top:379px" width="24" height="21" viewBox="0 0 24 21"><rect x="0.5" y="0.5" width="23" height="20" fill="#fff" stroke="#151515"/><rect x="1" y="19.2" width="23" height="1.3" fill="#151515"/><rect x="2" y="2" width="20" height="17" fill="url(#fish)"/><path d="M2 7 Q7 6.5 11 10 Q15 13 22 13.5 L22 15 Q14 15 9 12 Q5 10 2 10.5Z" fill="#2a8c78" opacity="0.85"/><path d="M12 2 L22 2 L22 8 Q17 8 12 2Z" fill="#f2fcff" opacity="0.8"/></svg>
<div class="t" style="left:743.5px;top:381px;font-size:12px;letter-spacing:0.1px;color:#1e1e1e">fish2.jpg</div>
<svg style="left:717px;top:405px" width="24" height="21" viewBox="0 0 24 21"><rect x="0.5" y="0.5" width="23" height="20" fill="#fff" stroke="#151515"/><rect x="1" y="19.2" width="23" height="1.3" fill="#151515"/><rect x="2" y="2" width="20" height="17" fill="url(#fish)"/><path d="M2 7 Q7 6.5 11 10 Q15 13 22 13.5 L22 15 Q14 15 9 12 Q5 10 2 10.5Z" fill="#2a8c78" opacity="0.85"/><path d="M12 2 L22 2 L22 8 Q17 8 12 2Z" fill="#f2fcff" opacity="0.8"/></svg>
<div class="t" style="left:743.5px;top:407px;font-size:12px;letter-spacing:0.1px;color:#1e1e1e">fish3.jpg</div>
<div class="a" style="left:7px;top:570px;width:788px;height:21px;background:linear-gradient(#f3efef,#f5f2f2);border-bottom:1px solid #c8c8c8"></div>
<div class="a" style="left:57px;top:571px;width:1px;height:20px;background:#dadada"></div>
<div class="t" style="left:8.3px;top:575px;font-size:9.5px;line-height:11px;color:#000;-webkit-text-stroke:0.12px #000">Insert</div>
<div class="t" style="left:61.6px;top:575px;font-size:9.5px;line-height:11px;color:#000;-webkit-text-stroke:0.12px #000">Common \ Desktop Test Notes \ Note with Attached Images</div>
<svg style="left:786px;top:580px" width="9" height="9" viewBox="0 0 9 9"><g fill="#b8b8b8"><rect x="6" y="0" width="1.5" height="1.5"/><rect x="6" y="3" width="1.5" height="1.5"/><rect x="3" y="3" width="1.5" height="1.5"/><rect x="6" y="6" width="1.5" height="1.5"/><rect x="3" y="6" width="1.5" height="1.5"/><rect x="0" y="6" width="1.5" height="1.5"/></g></svg>
</body></html>
